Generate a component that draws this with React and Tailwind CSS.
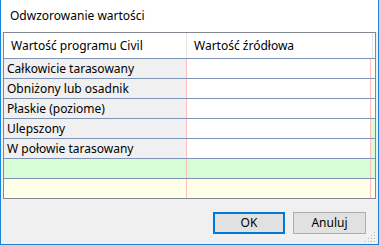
const ROWS = [
  "Całkowicie tarasowany",
  "Obniżony lub osadnik",
  "Płaskie (poziome)",
  "Ulepszony",
  "W połowie tarasowany",
];

// right filler strip colours, per row (as in the reference)
const FILL = ["bg-[#fffff0]", "bg-[#fffff0]", "bg-[#fffff0]", "bg-[#d6fdd6]", "bg-[#d6fdd6]", "bg-[#d6fdd6]", "bg-[#fffee8]"];

const Line = () => <div className="h-px shrink-0 bg-[#7f94b4]" />;

function Row({ label, fill, bg = "", first = "bg-[#f0f0f0]", h = "h-[19px]" }) {
  return (
    <div className={`flex shrink-0 ${h} ${bg}`}>
      <div className={`w-[182px] ${first} pl-[3px] flex items-center whitespace-nowrap`}>{label}</div>
      <div className="w-px bg-[#ffbcbc]" />
      <div className={`w-[183px] ${bg || "bg-white"}`} />
      <div className="w-px bg-[#ffbcbc]" />
      <div className={`flex-1 ${fill}`} />
    </div>
  );
}

function Grip() {
  const dots = [
    [9, 1], [9, 4], [6, 4], [9, 7], [6, 7], [3, 7], [9, 10], [6, 10], [3, 10], [0, 10],
  ];
  return (
    <svg width="12" height="12" viewBox="0 0 12 12" className="absolute right-[1px] bottom-[1px]">
      {dots.map(([x, y], i) => (
        <g key={i}>
          <rect x={x} y={y} width="1" height="1" fill="#b8b8b8" />
          <rect x={x + 1} y={y + 1} width="1" height="1" fill="#ffffff" />
        </g>
      ))}
    </svg>
  );
}

export default function App() {
  return (
    <div
      className="relative w-[379px] h-[245px] flex flex-col bg-[#f0f0f0] border-x border-b border-[#1883d7] text-[12px] text-black"
      style={{ fontFamily: '"Noto Sans", "Open Sans", sans-serif' }}
    >
      <div className="h-[32px] bg-white pl-[9px] flex items-center">Odwzorowanie wartości</div>

      <div className="mx-[2px] h-[167px] border border-[#828790] bg-white flex flex-col">
        <div className="flex h-[25px] shrink-0 bg-white">
          <div className="w-[182px] pl-[7px] flex items-center whitespace-nowrap">Wartość programu Civil</div>
          <div className="w-px bg-[#e5e5e5]" />
          <div className="w-[185px] pl-[7px] flex items-center whitespace-nowrap">Wartość źródłowa</div>
          <div className="w-px bg-[#e5e5e5]" />
          <div className="flex-1" />
        </div>
        <Line />
        {ROWS.map((r, i) => (
          <div key={r}>
            <Row label={r} fill={FILL[i]} />
            <Line />
          </div>
        ))}
        <Row label="" fill={FILL[5]} bg="bg-[#d6fdd6]" first="" />
        <Line />
        <Row label="" fill={FILL[6]} bg="bg-[#fffee8]" first="" h="h-[19px]" />
      </div>

      <div className="flex justify-end gap-[8px] mt-[13px] pr-[12px]">
        <button className="w-[72px] h-[22px] border-2 border-[#0078d7] bg-[#e1e1e1] flex items-center justify-center">
          OK
        </button>
        <button className="w-[73px] h-[22px] border border-[#adadad] bg-[#e1e1e1] flex items-center justify-center">
          Anuluj
        </button>
      </div>
      <Grip />
    </div>
  );
}
